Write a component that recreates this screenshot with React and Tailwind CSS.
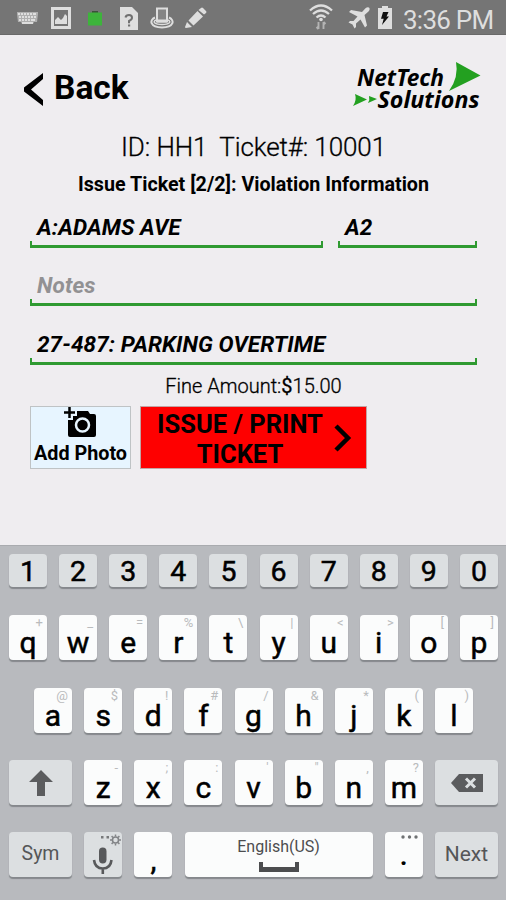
const NUMBERS = ['1', '2', '3', '4', '5', '6', '7', '8', '9', '0'];
const ROW_ONE = [['q', '+'], ['w', '_'], ['e', '='], ['r', '%'], ['t', '\\'], ['y', '|'], ['u', '<'], ['i', '>'], ['o', '['], ['p', ']']];
const ROW_TWO = [['a', '@'], ['s', '$'], ['d', '!'], ['f', '#'], ['g', '/'], ['h', '&'], ['j', '*'], ['k', '('], ['l', ')']];
const ROW_THREE = [['z', '-'], ['x', ';'], ['c', ':'], ['v', "'"], ['b', '"'], ['n', ','], ['m', '?']];

export default function App() {
  return (
    <div className="flex flex-col w-[506px] h-[900px] bg-[#efedf0] overflow-hidden font-[Roboto,sans-serif] text-black">
      <StatusBar />
      <main className="flex-1 min-h-0">
        <Header />
        <TicketForm />
      </main>
      <Keyboard />
    </div>
  );
}

function StatusBar() {
  return (
    <header className="flex items-center h-[35px] bg-[#757575] border-b border-[#696969] text-[#dedede] shrink-0">
      <svg className="mt-[2px] ml-[17px] w-[21px] h-[14px]" viewBox="0 0 21 14" fill="currentColor">
        <path d="M0 1h21v2l-1 8h-3l-1 2H5l-1-2H1L0 3z" opacity=".55" />
        <path d="M1 2h2v2H1zM4 2h2v2H4zM7 2h2v2H7zM10 2h2v2h-2zM13 2h2v2h-2zM16 2h3v2h-3zM2 5h2v2H2zM5 5h2v2H5zM8 5h2v2H8zM11 5h2v2h-2zM14 5h2v2h-2zM17 5h2v2h-2zM2 8h2v2H2zM5 8h2v2H5zM8 8h2v2H8zM11 8h2v2h-2zM14 8h4v2h-4zM5 11h11v2H5z" />
      </svg>
      <svg className="mt-[2px] ml-[13px] w-5 h-[22px]" viewBox="0 0 20 22" fill="currentColor">
        <path fillRule="evenodd" d="M0 0h20v22H0zM3 3v16h14V3z" />
        <path d="M4 17v-4l3-3 3 3 2-2 2-4 2 2v8z" />
      </svg>
      <svg className="mt-[3px] ml-[17px] w-[14px] h-4" viewBox="0 0 14 16">
        <path d="M4 0h6v2H4z" fill="#3c513b" />
        <path d="M0 1.500h14v13H0z" fill="#3db43b" />
      </svg>
      <svg className="mt-[2px] ml-[18px] w-[18px] h-[23px]" viewBox="0 0 18 23">
        <path d="M0 0h12l6 6v17H0z" fill="#dedede" />
        <path d="M5.500 10.500Q6 8 9 8t3 2.700Q12 12.500 9 14v2.200" fill="none" stroke="#707070" strokeWidth="2" />
        <path d="M8 17.500h2.200v2H8z" fill="#707070" />
      </svg>
      <svg className="mt-[2px] ml-[12px] w-6 h-[22px]" viewBox="0 0 24 22" fill="none" stroke="currentColor">
        <path d="M5 10.500C-1 13 0 20.500 12 20.500S25 13 19 10.500" strokeWidth="2" />
        <path d="M6 13c-4 2-1 4.500 6 4.500s10-2.500 6-4.500" strokeWidth="1.500" />
        <path d="M7 1.500h10v13H7z" strokeWidth="2" fill="#858585" />
        <path d="M7 14h10" strokeWidth="3" />
      </svg>
      <svg className="mt-[2px] ml-[11px] w-[22px] h-[22px]" viewBox="0 0 22 22" fill="currentColor">
        <path d="M16 1q1-1 2 0l3 3q1 1 0 2l-2 1.500L13.500 3zM12.500 4l5.500 5.500L8.500 18.500l-5-5zM2 15l5 5-6 1q-1 0-1-1z" />
      </svg>
      <svg className="ml-[102px] w-6 h-[26px]" viewBox="0 0 24 26" fill="none" stroke="currentColor" strokeWidth="2.300">
        <path d="M1 6.500q11-10 22 0M4 10q8-7 16 0M7.500 13.500q4.500-4 9 0" />
        <circle cx="12" cy="15.500" r="1.800" fill="currentColor" stroke="none" />
        <path d="M9.500 25v-7M7.500 23l2 2M14.500 18v7M14.500 18l2 2" strokeWidth="1.900" opacity=".6" />
      </svg>
      <svg className="mt-[2px] ml-[15px] w-[22px] h-[22px]" viewBox="0 0 22 22" fill="currentColor">
        <path d="M21 .5q1.500 1.500-.5 4L16.500 8 19 18.500 17 20.500 12.500 12.500 8 16.500 8 20 6.500 21.500 4.500 17.500.5 15.500 2 14H5.500L9.500 9.500 1 5 3 3 14 5 17.500 1.200Q19.500-.5 21 .5z" />
      </svg>
      <svg className="mt-[1px] ml-[8px] w-[14px] h-[23px]" viewBox="0 0 14 23">
        <path d="M4 0h6v2h4v21H0V2h4z" fill="#dedede" />
        <path d="M5 6h5.500L8.500 10.500H11L4 19l1.700-6.200H3z" fill="#111" />
      </svg>
      <span className="ml-[11px] mt-[5px] text-[26px] leading-none tracking-[-0.75px] whitespace-nowrap">3:36 PM</span>
    </header>
  );
}

function Header() {
  return (
    <div className="flex items-start justify-between pl-6 pr-[24px] h-[92px]">
      <button className="flex items-center gap-[11px] mt-[34px] h-[40px]">
        <svg className="w-[19px] h-[35px]" viewBox="0 0 19 35">
          <path d="M19 1v6L7 17.500 19 28v6L0 19.500v-4z" />
        </svg>
        <span className="-mt-[2px] text-[33.5px] font-bold leading-none">Back</span>
      </button>
      <svg className="mt-[25px] w-[130px] h-[52px]" viewBox="0 0 130 52">
        <text x="5" y="25.500" textLength="87" lengthAdjust="spacingAndGlyphs" fontSize="23.500" fontWeight="700" fontStyle="italic" fontFamily="'Noto Sans', sans-serif">NetTech</text>
        <text x="25.500" y="48" textLength="102" lengthAdjust="spacingAndGlyphs" fontSize="22.500" fontWeight="700" fontStyle="italic" fontFamily="'Noto Sans', sans-serif">Solutions</text>
        <path d="M104 2l24.500 13.500L97 31q10-14 7-29zM3 34l12 5.500L1 46q4-6 2-12zM17 36l8 3-9 4q2-3.500 1-7z" fill="#23a020" />
      </svg>
    </div>
  );
}

function Field({ className = '', muted, children }) {
  return (
    <div className={`flex flex-col justify-between h-[34px] ${className}`}>
      <div className={`pl-[7px] text-[22.5px] leading-[26px] tracking-[0.1px] font-bold italic whitespace-nowrap ${muted ? 'text-[#929193]' : ''}`}>{children}</div>
      <div className="h-[7px] shrink-0 border-x-2 border-b-3 border-[#2f9a31]" />
    </div>
  );
}

function TicketForm() {
  return (
    <div className="flex flex-col pl-[30px] pr-[29px]">
      <div className="pt-[4px] text-center text-[26px] leading-8 font-light tracking-[-0.1px] whitespace-pre [-webkit-text-stroke:0.3px_black]">ID: HH1  Ticket#: 10001</div>
      <div className="mt-[10px] text-center text-[19.7px] leading-6 font-bold whitespace-nowrap">Issue Ticket [2/2]: Violation Information</div>
      <div className="flex gap-[15px] mt-[17px]">
        <Field className="w-[293px]">A:ADAMS AVE</Field>
        <Field className="flex-1">A2</Field>
      </div>
      <Field className="mt-[24px]" muted>Notes</Field>
      <Field className="mt-[25px]">27-487: PARKING OVERTIME</Field>
      <div className="mt-[9px] text-center text-[20px] leading-6 font-light [-webkit-text-stroke:0.3px_black]">Fine Amount:<span className="font-normal">$</span>15.00</div>
      <div className="flex gap-[9px] mt-[8px]">
        <button className="flex flex-col items-center w-[101px] h-[63px] bg-[#e7f5ff] border border-[#bfc3c5]">
          <svg className="w-[35px] h-[32px] shrink-0" viewBox="0 0 35 32">
            <path d="M6.500 0v11M1 5.500h11" stroke="#000" strokeWidth="2.500" />
            <path d="M14 4h11l2 3h4q2 0 2 2v19q0 2-2 2H7q-2 0-2-2V13h5V9h4z" />
            <circle cx="19.500" cy="18" r="6.500" fill="none" stroke="#e7f5ff" strokeWidth="2.500" />
          </svg>
          <span className="mt-[3px] text-[19.8px] leading-6 font-bold whitespace-nowrap">Add Photo</span>
        </button>
        <button className="flex items-center w-[227px] h-[63px] bg-[#fe0000] border border-[#c3a4a4]">
          <span className="w-[198px] pt-[3px] text-center text-[25.5px] leading-[30px] font-bold">ISSUE / PRINT<br />TICKET</span>
          <svg className="-ml-[5px] w-[18px] h-7" viewBox="0 0 18 28" fill="none" stroke="#000" strokeWidth="4.500">
            <path d="M2 2l12 12L2 26" />
          </svg>
        </button>
      </div>
    </div>
  );
}

const keyBase = 'relative flex items-center justify-center rounded-[4px] shadow-[0_2px_1px_#85888c] shrink-0';

function Key({ label, hint }) {
  return (
    <div className={`${keyBase} w-[38px] h-[45px] bg-[#fbfcfc] pt-[10px] text-[30px] leading-none [-webkit-text-stroke:0.5px_black]`}>
      {label}
      {hint && <span className="absolute top-0 right-[4px] text-[13px] leading-[15px] text-[#b9bbbd] [-webkit-text-stroke:0]">{hint}</span>}
    </div>
  );
}

function Keyboard() {
  return (
    <section className="flex flex-col h-[355px] pt-[8px] pl-[9px] pr-2 bg-[#b8babe] border-t border-[#a9abaf] shrink-0">
      <div className="flex justify-between">
        {NUMBERS.map((n) => (
          <div key={n} className={`${keyBase} w-[38px] h-[33px] bg-[#dcdfe1] pt-[3px] text-[28.5px] leading-none [-webkit-text-stroke:0.5px_black]`}>{n}</div>
        ))}
      </div>
      <div className="flex justify-between mt-7">
        {ROW_ONE.map(([label, hint]) => <Key key={label} label={label} hint={hint} />)}
      </div>
      <div className="flex justify-between mt-7 px-[25px]">
        {ROW_TWO.map(([label, hint]) => <Key key={label} label={label} hint={hint} />)}
      </div>
      <div className="flex justify-between mt-[27px]">
        <div className={`${keyBase} w-[63px] h-[45px] bg-[#dcdfe1]`}>
          <svg className="w-6 h-[26px]" viewBox="0 0 24 26" fill="#5b5c5e"><path d="M12 0l12 12h-8v14H8V12H0z" /></svg>
        </div>
        {ROW_THREE.map(([label, hint]) => <Key key={label} label={label} hint={hint} />)}
        <div className={`${keyBase} w-[63px] h-[45px] bg-[#dcdfe1]`}>
          <svg className="w-8 h-[18px]" viewBox="0 0 32 18">
            <path d="M8 0h24v18H8L0 9z" fill="#5b5c5e" />
            <path d="M15 4.500l9 9M24 4.500l-9 9" stroke="#dcdfe1" strokeWidth="3" />
          </svg>
        </div>
      </div>
      <div className="flex justify-between mt-[27px]">
        <div className={`${keyBase} w-[63px] h-[45px] bg-[#dcdfe1] pb-[2px] text-[19.5px] text-[#555658]`}>Sym</div>
        <div className={`${keyBase} w-[38px] h-[45px] bg-[#dcdfe1]`}>
          <svg className="w-[38px] h-[45px]" viewBox="0 0 38 45" fill="none" stroke="#58595b">
            <rect x="15" y="15.500" width="7.500" height="16" rx="3.700" fill="#58595b" stroke="none" />
            <path d="M10 28q1 8.500 8.800 8.500T27.500 28M18.800 36v6" strokeWidth="2.600" />
            <circle cx="31.500" cy="8" r="3" strokeWidth="1.500" stroke="#828487" />
            <path d="M31.500 2.500v2M31.500 11.500v2M26 8h2M35 8h2M27.600 4.100l1.400 1.400M34 10.500l1.400 1.400M35.400 4.100L34 5.500M29 10.500l-1.400 1.400" strokeWidth="1.500" stroke="#828487" />
            <path d="M17 4h2.500v2.500H17zM22.500 4H25v2.500h-2.500z" fill="#77797b" stroke="none" />
          </svg>
        </div>
        <Key label="," />
        <div className={`${keyBase} flex-col w-[188px] h-[45px] bg-[#fbfcfc] text-[16px] leading-5 text-[#4c4d4f]`}>
          <span>English(US)</span>
          <svg className="mt-[5px] w-10 h-[10px]" viewBox="0 0 40 10"><path d="M0 0h4v5h32V0h4v10H0z" fill="#4c4d4f" /></svg>
        </div>
        <div className={`${keyBase} w-[38px] h-[45px] bg-[#fbfcfc] text-[30px] leading-none font-medium`}>
          .
          <svg className="absolute top-[3px] right-[5px] w-[17px] h-1" viewBox="0 0 17 4" fill="#6f7173">
            <circle cx="2" cy="2" r="1.700" /><circle cx="8.500" cy="2" r="1.700" /><circle cx="15" cy="2" r="1.700" />
          </svg>
        </div>
        <div className={`${keyBase} w-[63px] h-[45px] bg-[#dcdfe1] text-[21px] text-[#555658]`}>Next</div>
      </div>
    </section>
  );
}
